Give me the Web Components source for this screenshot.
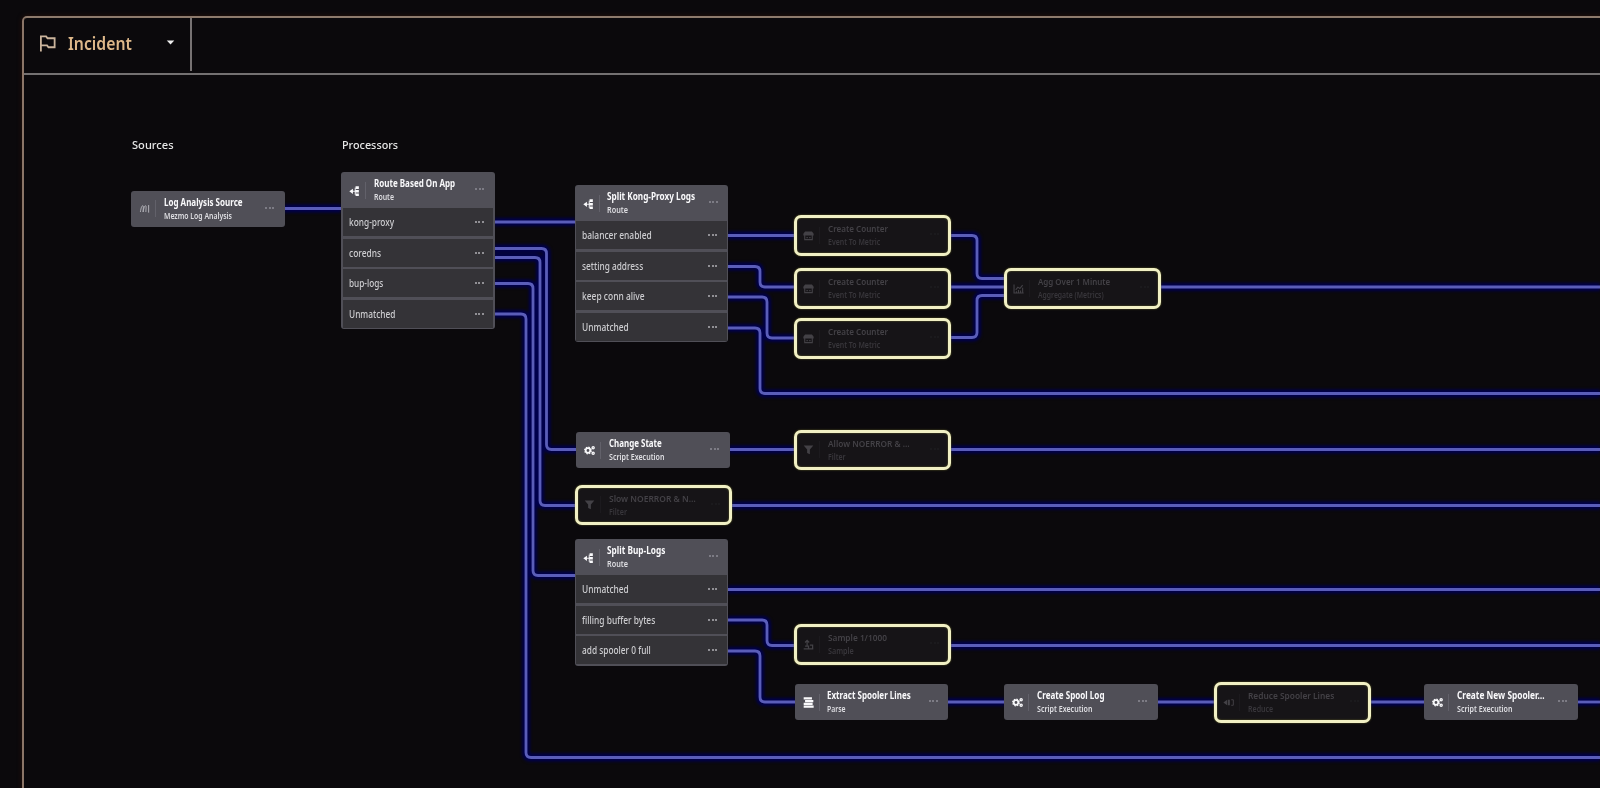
<!DOCTYPE html>
<html lang="en"><head><meta charset="utf-8"><title>Incident pipeline</title>
<style>
html,body{margin:0;height:100%;background:#0b090c;overflow:hidden}
body{font-family:"Noto Sans","Open Sans",sans-serif}
</style></head><body>
<pipeline-app></pipeline-app>
<script>
const ICONS={
 wave:'<path d="M2 13C3 7 4 4 5.500 4S6 9 6 13c1-6 2-9 3.500-9S10 9 10 13M14 3v11" fill="none" stroke="#b4b4ba" stroke-width="1.400"/>',
 route:'<path d="M9.500 2.500v11M3 8h7" fill="none" stroke="currentColor" stroke-width="1.400"/><path d="M.5 8l5.500-4v8z" fill="currentColor"/><path d="M10 .5h5v4h-5zM9.500 6h5.500v4H9.500zM10 11.500h5v4h-5z" fill="currentColor"/>',
 gears:'<circle cx="5.800" cy="8" r="3.300" fill="none" stroke="currentColor" stroke-width="2.500"/><circle cx="5.800" cy="8" r="4.900" fill="none" stroke="currentColor" stroke-width="1.600" stroke-dasharray="2.200 1.650"/><circle cx="13.300" cy="4" r="1.600" fill="none" stroke="currentColor" stroke-width="1.900"/><circle cx="13.300" cy="12" r="1.600" fill="none" stroke="currentColor" stroke-width="1.900"/>',
 counter:'<path d="M2.500 6h11v8h-11z" fill="none" stroke="currentColor" stroke-width="1.600"/><path d="M.5 5.500L3 2h10l2.500 3.500V8H.5zM5 10h2v2H5zM9 10h2v2H9z" fill="currentColor"/>',
 chart:'<path d="M1.500 2v12.500h14M4 10l3-4 3 2 4-5M5 12v2M8 10v4M11 11v3M14 7v7" fill="none" stroke="currentColor" stroke-width="1.600"/>',
 filter:'<path d="M1 2h14L10 8v7l-4-2V8z" fill="currentColor"/>',
 sample:'<path d="M1 14.500h14M3 10.500h5v4M6 2v8M3 5l3-3 3 3M10 9h4v5" fill="none" stroke="currentColor" stroke-width="1.800"/>',
 parse:'<path d="M1 .5h12v3.200H1zM3 4.500h12v3.200H3zM1 8.500h13v3.200H1zM1 12.500h14.500v3.200H1z" fill="currentColor"/>',
 reduce:'<path d="M.5 8l5.500-4v8zM7 4h3v8H7z" fill="currentColor"/><path d="M12 4h3v8h-3" fill="none" stroke="currentColor" stroke-width="1.400"/>'
};
const define=(tag,html,setup)=>customElements.define(tag,class extends HTMLElement{
 connectedCallback(){ if(this.shadowRoot)return; const r=this.attachShadow({mode:'open'}); r.innerHTML=html; if(setup)setup(this,r);}
});
/* condenses its line of text to the width given in w */
define('fit-text','<style>:host{display:inline-block;white-space:nowrap;transform-origin:0 50%}</style><slot></slot>',
 el=>requestAnimationFrame(()=>{const w=+el.getAttribute('w'),n=el.offsetWidth;if(w&&n)el.style.transform=`scaleX(${w/n})`;}));
define('more-dots','<style>:host{display:flex;gap:1.300px}i{width:2px;height:2px;border-radius:1px;background:currentColor}</style><i></i><i></i><i></i>');
customElements.define('node-icon',class extends HTMLElement{
 static get observedAttributes(){return ['name'];}
 constructor(){super();this.attachShadow({mode:'open'}).innerHTML='<style>:host{display:block}svg{display:block;width:100%;height:100%}</style><svg viewBox="0 0 16 16"></svg>';}
 attributeChangedCallback(){this.shadowRoot.querySelector('svg').innerHTML=ICONS[this.getAttribute('name')]||'';}
});
define('branch-row',`<style>:host{display:flex;align-items:center;justify-content:space-between;box-sizing:border-box;height:28px;margin:0 1.500px;padding:0 9.500px 0 6px;background:#343337;color:#cdcdd0;font-size:10px;font-weight:500;line-height:14px;white-space:nowrap}
more-dots{color:#b0b0b6}</style><fit-text><slot></slot></fit-text><more-dots></more-dots>`,
 (el,r)=>r.querySelector('fit-text').setAttribute('w',el.getAttribute('w')));
define('flow-node',`<style>
:host{display:block;position:absolute;box-sizing:border-box;width:153.500px;border-radius:3px;background:#504f57;color:#fafafc}
header{display:flex;box-sizing:border-box;height:36px;padding:0 10.500px 0 8px;align-items:center}
node-icon{width:11px;height:11px;margin-right:5px;flex:none}
:host([icon=route]) node-icon{width:10.500px;height:10.500px;margin:2px 5.500px 0 0}
.bar{width:1px;height:17px;background:#62616a;margin-right:7.500px;flex:none}
.txt{flex:1;white-space:nowrap;min-width:0}
b,small{display:block;height:13px}
b{font-size:9.700px;line-height:13px;font-weight:700}
small{font-size:8.300px;line-height:13px;font-weight:600;color:#dedee2}
more-dots{color:#8c8b94;flex:none;margin-top:-2px}
.rows{display:flex;flex-direction:column;gap:2.600px;padding-bottom:1.500px}
.rows.none{display:none}
:host([muted]){width:157px;border:3px solid #f1f0c4;border-radius:7px;background:#161417;color:#434146;box-shadow:0 0 2px #69682c,inset 0 0 2px #69682c}
:host([muted]) header{height:34.500px;padding:0 9px 0 6px}
:host([muted]) b{font-weight:600}
:host([muted]) small{color:#38363b}
:host([muted]) .bar{background:#1c1a1e}
:host([muted]) more-dots{color:#1e1c21}
</style><header><node-icon></node-icon><span class="bar"></span><div class="txt"><b><fit-text></fit-text></b><small><fit-text></fit-text></small></div><more-dots></more-dots></header><div class="rows"><slot></slot></div>`,
 (el,r)=>{const a=n=>el.getAttribute(n);el.style.left=a('x')+'px';el.style.top=a('y')+'px';
  r.querySelector('node-icon').setAttribute('name',a('icon'));
  const [w1,w2]=a('fit').split(' ');
  const t=r.querySelector('b fit-text'),s=r.querySelector('small fit-text');
  t.textContent=a('name');t.setAttribute('w',w1);s.textContent=a('kind');s.setAttribute('w',w2);
  if(!el.children.length)r.querySelector('.rows').classList.add('none');});
define('flow-edges',`<style>:host{display:block;position:absolute;inset:0}svg{display:block;width:1600px;height:788px}path{fill:none}.glow{stroke:#00004c;stroke-width:8;filter:blur(1.500px)}.line{stroke:#5a5db8;stroke-width:2.800}</style><svg viewBox="0 0 1600 788"><g class="glow"></g><g class="line"></g></svg>`,
 (el,r)=>{
  const step=(x0,y0,x,y1,x1)=>{const s=y1>y0?1:-1,c=5;return `M${x0} ${y0}H${x-c}Q${x} ${y0} ${x} ${y0+s*c}V${y1-s*c}Q${x} ${y1} ${x+c} ${y1}H${x1}`;};
  const d=['M284 208.500H341','M494 222H575','M728 235.500H795','M950 287H1005','M1160 287H1600','M729 449.500H795','M950 449.500H1600','M731 505.500H1600','M728 589.500H1600','M950 645.500H1600','M947 702H1005','M1157 702H1215','M1370 702H1425','M1577 702H1600',
   step(494,248.5,546.5,449.5,577),step(494,257.5,540,505.5,576),step(494,283.500,533,575.500,575),step(494,314,526,757.500,1600),
   step(728,266.500,760,287,795),step(728,297,767,338,795),step(728,328,760,393.500,1600),
   step(950,235.500,977,278.500,1005),step(950,337.500,977,295.500,1005),
   step(728,620,767,645.500,795),step(728,651,760,702,796)].map(p=>`<path d="${p}"/>`).join('');
  r.querySelector('.glow').innerHTML=d;r.querySelector('.line').innerHTML=d;});
define('column-label',`<style>:host{display:block;position:absolute;font-size:11.500px;line-height:16px;font-weight:500;color:#e6e6e6;white-space:nowrap}</style><fit-text><slot></slot></fit-text>`,
 (el,r)=>{el.style.left=el.getAttribute('x')+'px';el.style.top=el.getAttribute('y')+'px';r.querySelector('fit-text').setAttribute('w',el.getAttribute('w'));});
define('incident-bar',`<style>:host{display:flex;height:55px;border-bottom:2px solid #747172;box-sizing:content-box}
.tab{display:flex;align-items:center;box-sizing:border-box;width:168px;height:53px;border-right:2px solid #777273;padding:0 15px 3px 14.500px}
.flag{width:18px;height:18px;margin-right:11px;color:#cbb49c}
b{font-size:17.500px;line-height:24px;font-weight:600;color:#deb88a;flex:1}
.caret{width:9px;height:5px;margin-top:-1px;color:#eee}</style>
<div class="tab"><svg class="flag" viewBox="0 0 19 19"><path d="M2 18.500V2.500h5.500l1.500 2h7.500V14H10l-1.500-2H2" fill="none" stroke="currentColor" stroke-width="1.900"/></svg><b><fit-text w="64">Incident</fit-text></b><svg class="caret" viewBox="0 0 10 6"><path d="M.5.500h9L5 5.500z" fill="currentColor"/></svg></div>`);
define('pipeline-app',`<style>:host{display:block;position:relative;width:1600px;height:788px;overflow:hidden;box-sizing:border-box;padding:16px 0 0 22px}
main{box-sizing:border-box;width:1590px;height:800px;border:2px solid #8b7567;border-top-color:#8d7a6c;border-radius:5px 0 0 0;box-shadow:0 0 5px #2a120b}</style>
<main><incident-bar></incident-bar></main>
<flow-edges></flow-edges>
<column-label x="132" y="137" w="41.500">Sources</column-label><column-label x="341.500" y="137" w="56.500">Processors</column-label>
<flow-node x="131" y="190.500" icon="wave" name="Log Analysis Source" kind="Mezmo Log Analysis" fit="78.500 68"></flow-node>
<flow-node x="341" y="172" icon="route" name="Route Based On App" kind="Route" fit="81 20"><branch-row w="45">kong-proxy</branch-row><branch-row w="32">coredns</branch-row><branch-row w="34.500">bup-logs</branch-row><branch-row w="46.500">Unmatched</branch-row></flow-node>
<flow-node x="574.500" y="185" icon="route" name="Split Kong-Proxy Logs" kind="Route" fit="88 21"><branch-row w="70">balancer enabled</branch-row><branch-row w="61.500">setting address</branch-row><branch-row w="62.500">keep conn alive</branch-row><branch-row w="47">Unmatched</branch-row></flow-node>
<flow-node x="574.500" y="539" icon="route" name="Split Bup-Logs" kind="Route" fit="58 21"><branch-row w="47">Unmatched</branch-row><branch-row w="73">filling buffer bytes</branch-row><branch-row w="69">add spooler 0 full</branch-row></flow-node>
<flow-node muted x="794" y="215" icon="counter" name="Create Counter" kind="Event To Metric" fit="60 52"></flow-node>
<flow-node muted x="794" y="268" icon="counter" name="Create Counter" kind="Event To Metric" fit="60 52"></flow-node>
<flow-node muted x="794" y="318" icon="counter" name="Create Counter" kind="Event To Metric" fit="60 52"></flow-node>
<flow-node muted x="1004" y="268" icon="chart" name="Agg Over 1 Minute" kind="Aggregate (Metrics)" fit="72 65.500"></flow-node>
<flow-node x="576" y="432" icon="gears" name="Change State" kind="Script Execution" fit="52.500 55.500"></flow-node>
<flow-node muted x="794" y="429.500" icon="filter" name="Allow NOERROR &amp; …" kind="Filter" fit="82 17.500"></flow-node>
<flow-node muted x="575" y="484.500" icon="filter" name="Slow NOERROR &amp; N…" kind="Filter" fit="86.500 18"></flow-node>
<flow-node muted x="794" y="624" icon="sample" name="Sample 1/1000" kind="Sample" fit="59 26"></flow-node>
<flow-node x="794.500" y="684" icon="parse" name="Extract Spooler Lines" kind="Parse" fit="83.500 19"></flow-node>
<flow-node x="1004" y="684" icon="gears" name="Create Spool Log" kind="Script Execution" fit="67.500 55.500"></flow-node>
<flow-node muted x="1214" y="682" icon="reduce" name="Reduce Spooler Lines" kind="Reduce" fit="86 25.500"></flow-node>
<flow-node x="1424" y="684" icon="gears" name="Create New Spooler…" kind="Script Execution" fit="87.500 55.500"></flow-node>`);
</script></body></html>
